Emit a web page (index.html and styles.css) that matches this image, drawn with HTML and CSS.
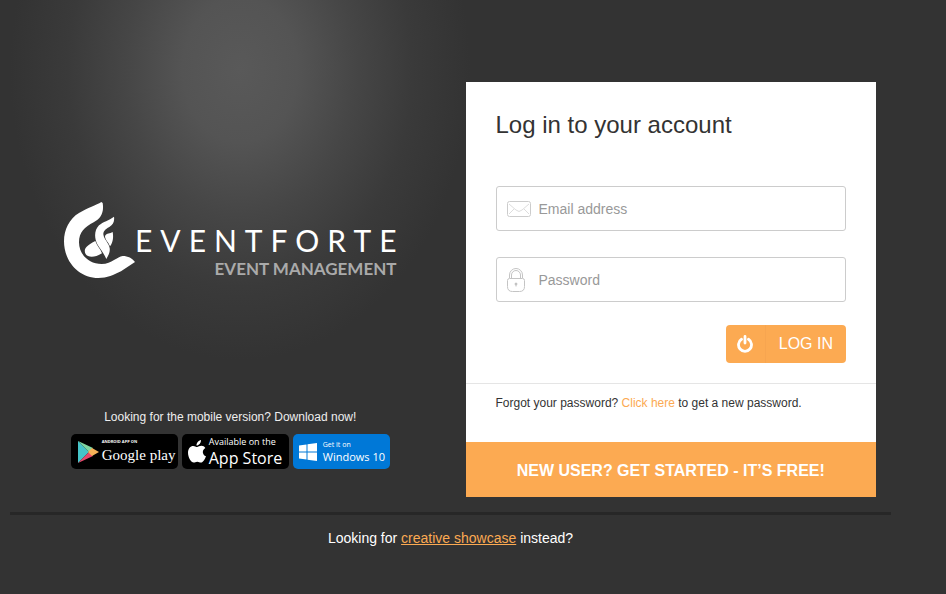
FILE: index.html
```html
<!DOCTYPE html>
<html lang="en">
<head>
<meta charset="utf-8">
<meta name="viewport" content="width=device-width, initial-scale=1">
<title>Log in - EventForte</title>
<link rel="stylesheet" href="styles.css">
</head>
<body>
<div class="page">
  <main class="columns">
    <section class="intro">
      <div class="brand">
        <svg class="brand-mark" viewBox="27 36 213 228" aria-hidden="true">
          <path fill="#fff" d="M139 36C124 45 98 54 72 69C43 86 27 119 27 154C27 214 71 264 130 264C157 264 176 255 198 244L240 216C232 205 219 198 203 198C187 199 171 222 140 222C101 222 72 193 72 157C72 127 89 111 116 97C136 87 148 69 143 39Z"/>
          <path fill="#fff" d="M177 80C179 94 175 104 163 111C150 118 145 124 145 133C147 149 161 158 164 174C166 188 159 198 154 207C147 190 136 178 127 163C117 143 118 120 132 106C144 95 162 92 177 80Z"/>
          <path fill="#fff" d="M121 153C126 168 137 177 141 190C129 198 111 203 99 198C88 193 86 178 95 170C101 165 111 158 121 153Z"/>
          <path fill="#fff" d="M150 138C155 129 165 131 173 126C176 142 174 158 165 169C161 157 150 150 150 138Z"/>
        </svg>
        <div class="brand-text">
          <span class="brand-name">EVENTFORTE</span>
          <span class="brand-line">EVENT MANAGEMENT</span>
        </div>
      </div>
      <div class="mobile">
        <p class="mobile-text">Looking for the mobile version? Download now!</p>
        <div class="badges">
          <a class="badge google" href="#">
            <svg width="22" height="24" viewBox="0 0 22 24" aria-hidden="true">
              <path fill="#45c4c9" d="M1 1L12 12L1 23Z"/>
              <path fill="#7fd6a0" d="M1 1L16 8L12 12Z"/>
              <path fill="#e8476a" d="M1 23L16 16L12 12Z"/>
              <path fill="#f7b258" d="M15 8L22 12L15 16L11 12Z"/>
            </svg>
            <span class="badge-text"><small>ANDROID APP ON</small><b>Google play</b></span>
          </a>
          <a class="badge apple" href="#">
            <svg width="18" height="23" viewBox="0 0 18 23" aria-hidden="true">
              <path fill="#fff" d="M13 0C13 3 11 5.500 8.500 5.500C8.400 3 10.500 .5 13 0ZM9 7C10.200 7 11.500 5.800 13.500 5.800C15 5.800 16.500 6.600 17.300 7.900C13.700 10 14.200 14.800 18 16.200C17 19 15 22.600 12.900 22.600C11.500 22.600 11 21.800 9.300 21.800C7.600 21.800 7 22.600 5.700 22.600C3.200 22.600 0 17.500 0 12.800C0 8.500 2.500 5.900 5.200 5.900C6.900 5.900 8 7 9 7Z"/>
            </svg>
            <span class="badge-text"><small>Available on the</small><b>App Store</b></span>
          </a>
          <a class="badge windows" href="#">
            <svg width="18" height="18" viewBox="0 0 18 18" aria-hidden="true">
              <path fill="#fff" d="M0 2.500L7.500 1.500V8.500H0ZM8.500 1.300L18 0V8.500H8.500ZM0 9.500H7.500V16.500L0 15.500ZM8.500 9.500H18V18L8.500 16.700Z"/>
            </svg>
            <span class="badge-text"><small>Get it on</small><b>Windows 10</b></span>
          </a>
        </div>
      </div>
    </section>

    <section class="card-column">
      <div class="card">
        <form class="login">
          <h1>Log in to your account</h1>
          <div class="field">
            <svg width="24" height="16" viewBox="0 0 24 16" aria-hidden="true" fill="none" stroke="#ccc">
              <rect x=".5" y=".5" width="23" height="15" rx="2"/>
              <path stroke="#ddd" d="M2 3L9 9Q12 12 15 9L22 3M2 13L7 8M22 13L17 8"/>
            </svg>
            <input type="email" aria-label="Email address" placeholder="Email address">
          </div>
          <div class="field">
            <svg width="18" height="24" viewBox="0 0 18 24" aria-hidden="true" fill="none" stroke="#c4c4c4">
              <path d="M2.500 10V7A6 6 0 0 1 15.500 7V10M4.500 10V7A4 4 0 0 1 13.500 7V10"/>
              <path d="M2.500 10.500H15.500Q17.500 10.500 17.500 12.500V18.500Q17.500 23.500 12.500 23.500H5.500Q.5 23.500 .5 18.500V12.500Q.5 10.500 2.500 10.500Z"/>
              <circle cx="9" cy="16" r="1" fill="#aaa"/><path d="M9 16V18.500"/>
            </svg>
            <input type="password" aria-label="Password" placeholder="Password">
          </div>
          <button class="submit" type="submit">
            <span class="submit-icon">
              <svg width="16" height="18" viewBox="0 0 16 18" aria-hidden="true" fill="none" stroke="#fff" stroke-width="2.800">
                <path stroke-linecap="round" d="M4.500 4.300A6.500 6.500 0 1 0 11.500 4.300M8 1.500V8"/>
              </svg>
            </span>
            <span class="submit-label">LOG IN</span>
          </button>
        </form>
        <p class="forgot">Forgot your password? <a href="#">Click here</a> to get a new password.</p>
        <a class="signup" href="#">NEW USER? GET STARTED - IT’S FREE!</a>
      </div>
    </section>
  </main>
  <footer class="footer">Looking for <a href="#">creative showcase</a> instead?</footer>
</div>
</body>
</html>
```
FILE: styles.css
```css
* {
  box-sizing: border-box;
}

body {
  margin: 0;
  min-height: 100vh;
  background: #333 radial-gradient(ellipse 230px 290px at 240px 70px, #595959 0%, #545454 25%, #464646 50%, #3a3a3a 75%, #333 100%) no-repeat;
  color: #fff;
  font-family: "Liberation Sans", Arial, sans-serif;
}

.page {
  margin: 0 55px 0 10px;
  padding-top: 82px;
}

.columns {
  display: grid;
  grid-template-columns: 1fr 1fr;
}

.intro {
  display: flex;
  flex-direction: column;
  align-items: center;
  padding: 120px 15px 0;
}

.brand {
  display: flex;
}

.brand-mark {
  width: 71px;
  height: 76px;
}

.brand-text {
  display: flex;
  flex-direction: column;
  align-items: flex-end;
  padding-top: 20px;
  font-family: Lato, sans-serif;
}

.brand-name {
  margin-right: -8px;
  font-size: 30px;
  line-height: 36px;
  letter-spacing: 8px;
}

.brand-line {
  color: #aaa;
  font-size: 17px;
  font-weight: 700;
  line-height: 22px;
}

.mobile {
  margin-top: 128px;
  text-align: center;
}

.mobile-text {
  margin: 0;
  font-size: 12px;
  line-height: 18px;
  color: #eee;
}

.badges {
  display: flex;
  gap: 4px;
  margin-top: 8px;
}

.badge {
  display: flex;
  align-items: center;
  gap: 3px;
  height: 35px;
  padding: 0 6px;
  border-radius: 5px;
  background: #000;
  color: #fff;
  font-family: "Open Sans", sans-serif;
  text-align: left;
  text-decoration: none;
  white-space: nowrap;
}

.badge svg {
  flex: none;
}

.badge-text small,
.badge-text b {
  display: block;
  font-weight: 400;
}

.google,
.apple {
  width: 107px;
}

.google .badge-text small {
  font-size: 4px;
  font-weight: 700;
  line-height: 6px;
}

.google .badge-text b {
  font-family: "Liberation Serif", serif;
  font-size: 15px;
  line-height: 20px;
}

.apple .badge-text small {
  font-size: 9px;
  line-height: 12px;
}

.apple .badge-text b {
  font-size: 16px;
  line-height: 20px;
}

.windows {
  width: 97px;
  gap: 6px;
  background: #0078d7;
}

.windows .badge-text small {
  font-size: 7px;
  line-height: 10px;
}

.windows .badge-text b {
  font-size: 11px;
  line-height: 14px;
}

.card-column {
  padding: 0 15px;
}

.card {
  background: #fff;
  color: #333;
}

.login {
  display: flex;
  flex-direction: column;
  padding: 28px 30px 20px;
  border-bottom: 1px solid #e5e5e5;
}

h1 {
  margin: 0 0 46px;
  font-size: 24px;
  font-weight: 400;
  line-height: 30px;
}

.field {
  display: flex;
  align-items: center;
  height: 45px;
  margin-bottom: 26px;
  border: 1px solid #ccc;
  border-radius: 3px;
}

.field svg {
  flex: none;
  margin-left: 10px;
}

.field input {
  flex: 1;
  min-width: 0;
  height: 100%;
  padding: 0 8px;
  border: 0;
  background: none;
  font: 14px "Liberation Sans", Arial, sans-serif;
}

.field input[type="password"] {
  padding-left: 14px;
}

.field input::placeholder {
  color: #999;
}

.submit {
  display: flex;
  align-items: center;
  align-self: flex-end;
  height: 38px;
  margin-top: -3px;
  padding: 0;
  border: 0;
  border-radius: 4px;
  background: #fcaa52;
  color: #fff;
  font: 16px "Liberation Sans", Arial, sans-serif;
}

.submit-icon {
  display: flex;
  align-items: center;
  justify-content: center;
  width: 40px;
  height: 100%;
  border-right: 1px solid #f7a550;
}

.submit-label {
  padding: 0 13px;
}

.forgot {
  margin: 0;
  padding: 10px 30px 30px;
  font-size: 12px;
  line-height: 18px;
}

.forgot a {
  color: #fcaa52;
  text-decoration: none;
}

.signup {
  display: block;
  padding-top: 3px;
  background: #fcaa52;
  color: #fff;
  font-size: 16px;
  font-weight: 700;
  line-height: 52px;
  text-align: center;
  text-decoration: none;
}

.footer {
  margin-top: 15px;
  padding-top: 12px;
  border-top: 3px solid #272727;
  font-size: 14px;
  line-height: 22px;
  text-align: center;
}

.footer a {
  color: #fcaa52;
}
```
